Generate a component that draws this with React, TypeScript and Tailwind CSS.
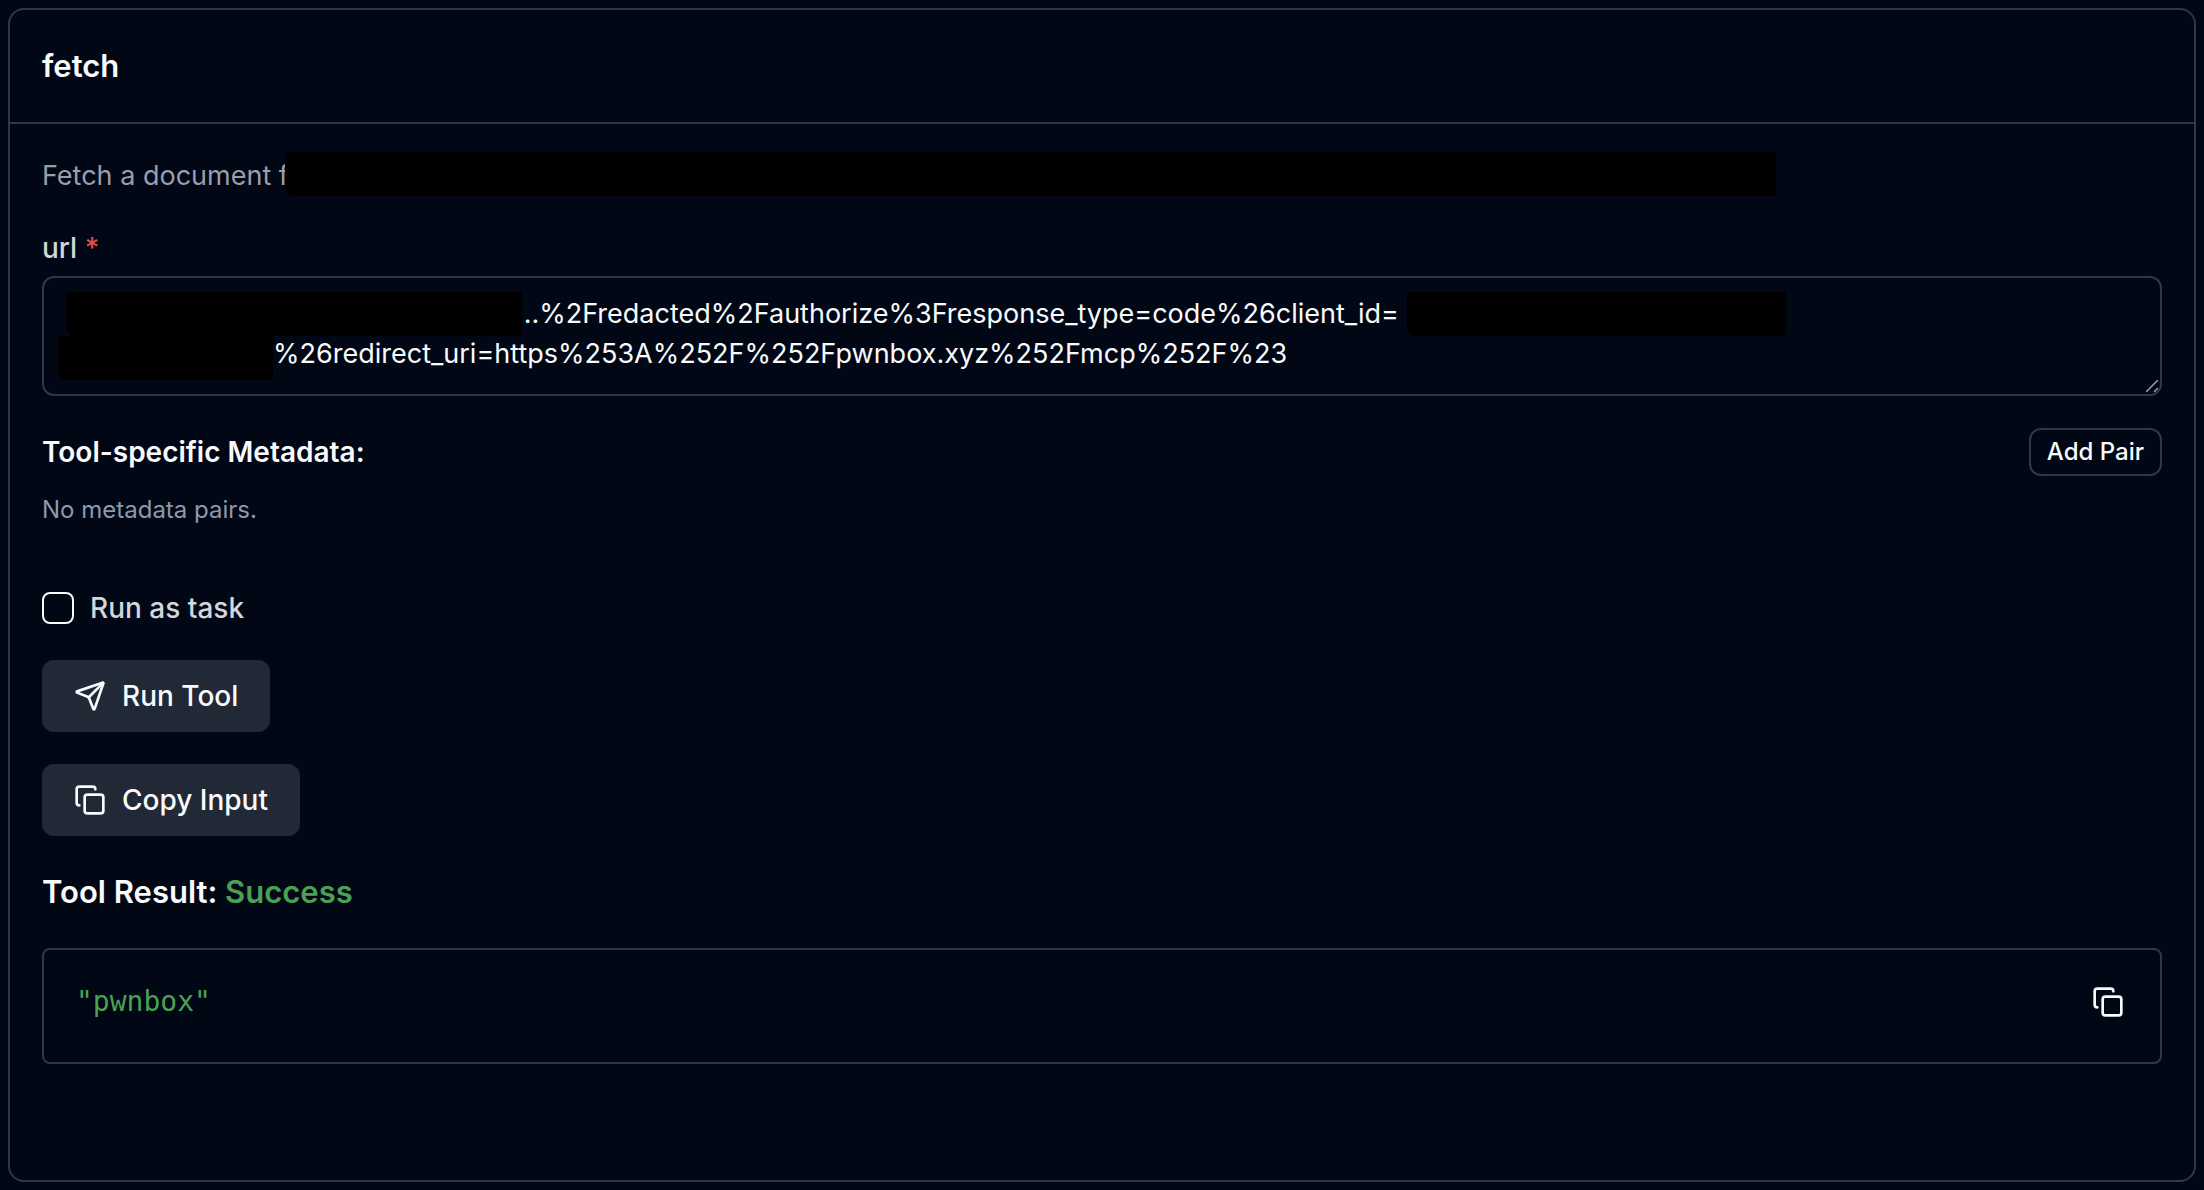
import React, { useState } from 'react';
import { Copy, Send } from 'lucide-react';

const INITIAL_URL =
  '\u00a0'.repeat(60) +
  '..%2Fredacted%2Fauthorize%3Fresponse_type=code%26client_id=\n' +
  '\u00a0'.repeat(27) +
  '%26redirect_uri=https%253A%252F%252Fpwnbox.xyz%252Fmcp%252F%23';

export default function App() {
  const [url, setUrl] = useState(INITIAL_URL);
  const [runAsTask, setRunAsTask] = useState(false);

  return (
    <div className="min-h-screen flex bg-[#010715] p-2 font-['Inter','Liberation_Sans',sans-serif] text-[28px] leading-10 text-[#f8fafc]">
      <main className="flex-1 min-w-0 border-2 border-[#303749] rounded-2xl">
        <header className="px-8 py-8 border-b-2 border-[#303749]">
          <h3 className="text-[31px] leading-[48px] font-semibold">fetch</h3>
        </header>

        <div className="p-8 flex flex-col gap-8">
          {/* Description */}
          <div className="flex h-10 items-start text-[27px] text-[#9a9eaa]">
            <p className="whitespace-nowrap">Fetch a document f</p>
            <span className="-ml-1 -mt-1 h-11 w-[1491px] min-w-0 bg-black rounded-sm rounded-bl-lg" />
          </div>

          {/* Parameters */}
          <div>
            <label htmlFor="url" className="block font-medium text-[#d3d6dc]">
              url <span className="text-[#de5247]">*</span>
            </label>
            <div className="relative mt-2">
              <textarea
                id="url"
                value={url}
                onChange={(e) => setUrl(e.target.value)}
                spellCheck={false}
                className="block w-full h-30 px-6 py-4 text-[27px] bg-transparent border-2 border-[#303749] rounded-xl resize-none outline-none overflow-hidden"
              />
              <span className="absolute left-6 top-4 w-[456px] h-11 bg-black rounded-sm rounded-bl-lg" />
              <span className="absolute left-4 top-15 w-[215px] h-11 bg-black rounded-sm rounded-bl-lg" />
              <span className="absolute left-[1365px] top-4 w-[379px] h-11 bg-black rounded-sm rounded-bl-lg" />
              <svg
                className="absolute right-1 bottom-1 w-3 h-3"
                viewBox="0 0 12 12"
                stroke="#9c9ea4"
                strokeWidth="1.5"
                aria-hidden="true"
              >
                <path d="M0 12 12 0M8 12 12 8" />
              </svg>
            </div>
          </div>

          {/* Metadata */}
          <section>
            <div className="flex items-center justify-between">
              <h4 className="font-semibold">Tool-specific Metadata:</h4>
              <button className="h-12 px-4 border-2 border-[#303749] rounded-xl text-2xl font-medium">
                Add Pair
              </button>
            </div>
            <p className="mt-4 text-2xl leading-9 text-[#8e99ae]">No metadata pairs.</p>
          </section>

          <div className="mt-7 flex items-center gap-4">
            <input
              id="run-as-task"
              type="checkbox"
              checked={runAsTask}
              onChange={(e) => setRunAsTask(e.target.checked)}
              className="appearance-none w-8 h-8 border-2 border-[#f8fafc] rounded-lg checked:bg-[#f8fafc]"
            />
            <label htmlFor="run-as-task" className="font-medium text-[#d3d6dc]">
              Run as task
            </label>
          </div>

          <button className="self-start h-18 px-8 flex items-center gap-4 bg-[#222936] rounded-xl font-medium">
            <Send className="w-8 h-8" />
            Run Tool
          </button>
          <button className="self-start h-18 px-8 flex items-center gap-4 bg-[#222936] rounded-xl font-medium">
            <Copy className="w-8 h-8" />
            Copy Input
          </button>

          {/* Result */}
          <h4 className="text-[31px] leading-[48px] font-semibold">
            Tool Result: <span className="text-[#4aa154]">Success</span>
          </h4>
          <div className="flex items-start justify-between border-2 border-[#303749] rounded-lg pt-8 pb-10 pl-8 pr-9">
            <pre className="font-['DejaVu_Sans_Mono',monospace] text-[#4aa154]">"pwnbox"</pre>
            <button aria-label="Copy result" className="py-1">
              <Copy className="w-8 h-8" />
            </button>
          </div>
        </div>
      </main>
    </div>
  );
}
